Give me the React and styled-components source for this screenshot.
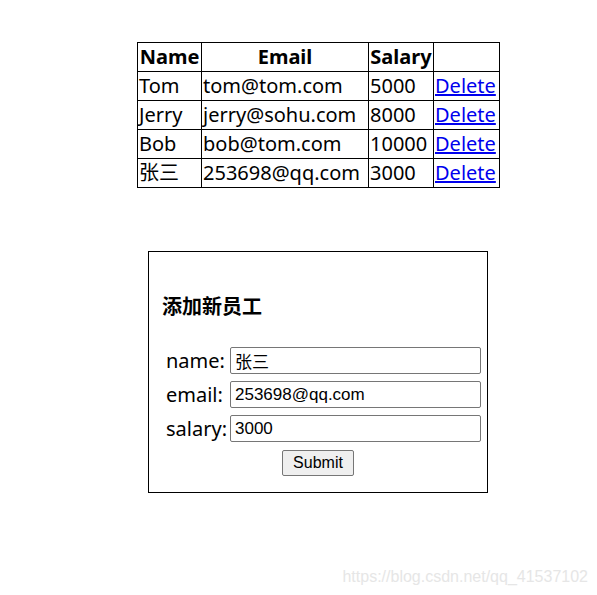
import React from 'react';
import styled, { createGlobalStyle } from 'styled-components';

const GlobalStyle = createGlobalStyle`
  html, body {
    margin: 0;
    padding: 0;
    background: #fff;
  }
  body {
    font-family: "Noto Sans", "Noto Sans CJK SC", sans-serif;
    color: #000;
  }
`;

const Page = styled.div`
  position: relative;
  width: 597px;
  height: 595px;
  overflow: hidden;
`;

const Column = styled.div`
  padding: 42px 0 0 137px;
  display: flex;
  flex-direction: column;
  align-items: flex-start;
`;

const Table = styled.table`
  border-collapse: collapse;
  table-layout: fixed;
  width: 363px;
  font-size: 20px;
`;

const Cell = styled.td`
  border: 1px solid #000;
  padding: 0 1px;
  height: 28px;
  line-height: 26px;
  white-space: nowrap;
  text-align: ${({ $center }) => ($center ? 'center' : 'left')};
  font-weight: ${({ $bold }) => ($bold ? 700 : 400)};
`;

const DeleteLink = styled.a`
  color: #0000ee;
  text-decoration: underline;
`;

const FormBox = styled.form`
  margin: 63px 0 0 11px;
  width: 340px;
  box-sizing: border-box;
  border: 1px solid #000;
  padding: 0 6px 16px;
  display: flex;
  flex-direction: column;
`;

const Heading = styled.h3`
  margin: 41px 0 28px 7px;
  font-size: 20px;
  line-height: 26px;
  font-weight: 700;
  font-family: "Noto Sans CJK SC", sans-serif;
`;

const Fields = styled.div`
  display: grid;
  grid-template-columns: 64px 1fr;
  row-gap: 7px;
  align-items: center;
  padding-left: 11px;
`;

const Label = styled.label`
  font-size: 20px;
  line-height: 27px;
`;

const Input = styled.input`
  box-sizing: border-box;
  height: 27px;
  width: 100%;
  margin: 0;
  padding: 1px 4px;
  border: 1px solid #767676;
  border-radius: 2px;
  font-family: "Liberation Sans", "Noto Sans CJK SC", Arial, sans-serif;
  font-size: 17px;
  color: #000;
`;

const SubmitButton = styled.button`
  align-self: center;
  margin-top: 8px;
  width: 72px;
  height: 26px;
  padding: 0;
  background: #efefef;
  border: 1px solid #767676;
  border-radius: 2px;
  font-family: "Liberation Sans", Arial, sans-serif;
  font-size: 16px;
  color: #000;
`;

const Watermark = styled.div`
  position: absolute;
  right: 9px;
  bottom: 9px;
  font-family: "Liberation Sans", Arial, sans-serif;
  font-size: 16px;
  color: #e6e6e6;
`;

const employees = [
  { name: 'Tom', email: 'tom@tom.com', salary: 5000 },
  { name: 'Jerry', email: 'jerry@sohu.com', salary: 8000 },
  { name: 'Bob', email: 'bob@tom.com', salary: 10000 },
  { name: '张三', email: '253698@qq.com', salary: 3000 },
];

export default function App() {
  return (
    <Page>
      <GlobalStyle />
      <Column>
        <Table>
          <colgroup>
            <col style={{ width: 64 }} />
            <col style={{ width: 167 }} />
            <col style={{ width: 65 }} />
            <col style={{ width: 66 }} />
          </colgroup>
          <thead>
            <tr>
              <Cell as="th" $bold $center>Name</Cell>
              <Cell as="th" $bold $center>Email</Cell>
              <Cell as="th" $bold $center>Salary</Cell>
              <Cell as="th" />
            </tr>
          </thead>
          <tbody>
            {employees.map((e) => (
              <tr key={e.email}>
                <Cell>{e.name}</Cell>
                <Cell>{e.email}</Cell>
                <Cell>{e.salary}</Cell>
                <Cell>
                  <DeleteLink href="#">Delete</DeleteLink>
                </Cell>
              </tr>
            ))}
          </tbody>
        </Table>

        <FormBox onSubmit={(ev) => ev.preventDefault()}>
          <Heading>添加新员工</Heading>
          <Fields>
            <Label>name:</Label>
            <Input defaultValue="张三" />
            <Label>email:</Label>
            <Input defaultValue="253698@qq.com" />
            <Label>salary:</Label>
            <Input defaultValue="3000" />
          </Fields>
          <SubmitButton type="submit">Submit</SubmitButton>
        </FormBox>
      </Column>
      <Watermark>https://blog.csdn.net/qq_41537102</Watermark>
    </Page>
  );
}
